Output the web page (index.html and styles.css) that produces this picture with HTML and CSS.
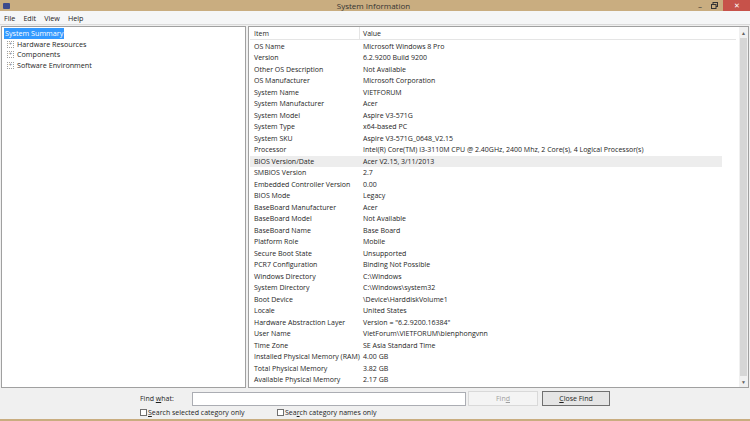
FILE: index.html
```html
<!DOCTYPE html>
<html lang="en">
<head>
    <meta charset="UTF-8">
    <title>System Information</title>
    <link rel="stylesheet" href="styles.css">
</head>
<body>
    <div class="window">
        <div class="titlebar">
            <span class="app-icon"></span>
            <span class="title">System Information</span>
            <div class="controls">
                <span class="ctl min">&#8211;</span>
                <span class="ctl restore">
                    <svg width="7" height="7" viewBox="0 0 7 7"><rect x="2" y="0.5" width="4.5" height="4" fill="none" stroke="#333" stroke-width="1"/><rect x="0.5" y="2.5" width="4.5" height="4" fill="#c9ad80" stroke="#333" stroke-width="1"/></svg>
                </span>
                <span class="ctl close">&#10005;</span>
            </div>
        </div>

        <div class="menubar">
            <span>File</span>
            <span>Edit</span>
            <span>View</span>
            <span>Help</span>
        </div>

        <div class="main">
            <div class="tree">
                <div class="node selected">System Summary</div>
                <div class="node child"><span class="plus">+</span>Hardware Resources</div>
                <div class="node child"><span class="plus">+</span>Components</div>
                <div class="node child"><span class="plus">+</span>Software Environment</div>
            </div>

            <div class="details">
                <div class="list">
                    <div class="row head"><span class="item">Item</span><span class="value">Value</span></div>
                    <div class="row"><span class="item">OS Name</span><span class="value">Microsoft Windows 8 Pro</span></div>
                    <div class="row"><span class="item">Version</span><span class="value">6.2.9200 Build 9200</span></div>
                    <div class="row"><span class="item">Other OS Description</span><span class="value">Not Available</span></div>
                    <div class="row"><span class="item">OS Manufacturer</span><span class="value">Microsoft Corporation</span></div>
                    <div class="row"><span class="item">System Name</span><span class="value">VIETFORUM</span></div>
                    <div class="row"><span class="item">System Manufacturer</span><span class="value">Acer</span></div>
                    <div class="row"><span class="item">System Model</span><span class="value">Aspire V3-571G</span></div>
                    <div class="row"><span class="item">System Type</span><span class="value">x64-based PC</span></div>
                    <div class="row"><span class="item">System SKU</span><span class="value">Aspire V3-571G_0648_V2.15</span></div>
                    <div class="row"><span class="item">Processor</span><span class="value">Intel(R) Core(TM) i3-3110M CPU @ 2.40GHz, 2400 Mhz, 2 Core(s), 4 Logical Processor(s)</span></div>
                    <div class="row hover"><span class="item">BIOS Version/Date</span><span class="value">Acer V2.15, 3/11/2013</span></div>
                    <div class="row"><span class="item">SMBIOS Version</span><span class="value">2.7</span></div>
                    <div class="row"><span class="item">Embedded Controller Version</span><span class="value">0.00</span></div>
                    <div class="row"><span class="item">BIOS Mode</span><span class="value">Legacy</span></div>
                    <div class="row"><span class="item">BaseBoard Manufacturer</span><span class="value">Acer</span></div>
                    <div class="row"><span class="item">BaseBoard Model</span><span class="value">Not Available</span></div>
                    <div class="row"><span class="item">BaseBoard Name</span><span class="value">Base Board</span></div>
                    <div class="row"><span class="item">Platform Role</span><span class="value">Mobile</span></div>
                    <div class="row"><span class="item">Secure Boot State</span><span class="value">Unsupported</span></div>
                    <div class="row"><span class="item">PCR7 Configuration</span><span class="value">Binding Not Possible</span></div>
                    <div class="row"><span class="item">Windows Directory</span><span class="value">C:\Windows</span></div>
                    <div class="row"><span class="item">System Directory</span><span class="value">C:\Windows\system32</span></div>
                    <div class="row"><span class="item">Boot Device</span><span class="value">\Device\HarddiskVolume1</span></div>
                    <div class="row"><span class="item">Locale</span><span class="value">United States</span></div>
                    <div class="row"><span class="item">Hardware Abstraction Layer</span><span class="value">Version = "6.2.9200.16384"</span></div>
                    <div class="row"><span class="item">User Name</span><span class="value">VietForum\VIETFORUM\bienphongvnn</span></div>
                    <div class="row"><span class="item">Time Zone</span><span class="value">SE Asia Standard Time</span></div>
                    <div class="row"><span class="item">Installed Physical Memory (RAM)</span><span class="value">4.00 GB</span></div>
                    <div class="row"><span class="item">Total Physical Memory</span><span class="value">3.82 GB</span></div>
                    <div class="row"><span class="item">Available Physical Memory</span><span class="value">2.17 GB</span></div>
                </div>
                <div class="scrollbar">
                    <span class="arrow">&#9650;</span>
                    <span class="thumb"></span>
                    <span class="arrow">&#9660;</span>
                </div>
            </div>
        </div>

        <div class="findbar">
            <div class="find-row">
                <label class="find-label">Find <u>w</u>hat:</label>
                <input type="text" class="find-input">
                <button class="btn" disabled>Fin<u>d</u></button>
                <button class="btn primary"><u>C</u>lose Find</button>
            </div>
            <div class="check-row">
                <label class="check"><span class="box"></span><u>S</u>earch selected category only</label>
                <label class="check"><span class="box"></span>Sea<u>r</u>ch category names only</label>
            </div>
        </div>
    </div>
</body>
</html>
```

FILE: styles.css
```css
* {
    margin: 0;
    padding: 0;
    box-sizing: border-box;
}
body {
    font-family: "Open Sans", "Noto Sans", sans-serif;
    font-size: 7px;
    color: #1e1e1e;
    background: #c9ad80;
    width: 750px;
    height: 421px;
    overflow: hidden;
}
.window {
    height: 421px;
    display: flex;
    flex-direction: column;
    padding-bottom: 2px;
}
.titlebar {
    height: 11px;
    display: flex;
    align-items: center;
    background: #c9ad80;
}
.app-icon {
    width: 7px;
    height: 6px;
    margin-left: 3px;
    background: #3d4a8c;
    border-radius: 1px;
}
.title {
    flex: 1;
    text-align: center;
    font-size: 8px;
    color: #333;
    margin-left: 44px;
}
.controls {
    display: flex;
    height: 11px;
}
.ctl {
    width: 14px;
    display: flex;
    align-items: center;
    justify-content: center;
    color: #333;
    font-size: 8px;
}
.ctl.close {
    width: 27px;
    background: #c7524a;
    color: #fff;
    font-size: 7px;
    margin-left: 2px;
}
.menubar {
    height: 14px;
    background: #f5f6f7;
    display: flex;
    align-items: center;
    gap: 8px;
    padding-left: 4px;
    font-size: 7.2px;
    border-bottom: 1px solid #dadada;
}
.main {
    flex: 1;
    display: grid;
    grid-template-columns: 245px 1fr;
    gap: 2px;
    padding: 1px 1px 0 1px;
    background: #f0f0f0;
    min-height: 0;
}
.tree {
    background: #fff;
    border: 1px solid #a0a0a0;
    padding: 1px 0 0 2px;
}
.node {
    height: 11px;
    line-height: 11px;
    font-size: 7.2px;
    white-space: nowrap;
}
.node.selected {
    display: inline-block;
    background: #3399ff;
    color: #fff;
    padding: 0 1px;
}
.node.child {
    display: flex;
    align-items: center;
    padding-left: 3px;
    margin-top: -0.5px;
}
.plus {
    width: 7px;
    height: 7px;
    border: 1px dotted #a0a0a0;
    font-size: 6px;
    line-height: 5px;
    text-align: center;
    color: #777;
    margin-right: 3px;
}
.details {
    background: #fff;
    border: 1px solid #a0a0a0;
    display: flex;
    overflow: hidden;
}
.list {
    flex: 1;
    padding-left: 1px;
}
.row {
    display: flex;
    height: 11.52px;
    line-height: 11.52px;
    white-space: nowrap;
    font-size: 7px;
}
.row.head {
    height: 13px;
    line-height: 13px;
    border-bottom: 1px solid #e5e5e5;
    margin-bottom: 0.5px;
}
.row.head .item {
    border-right: 1px solid #e5e5e5;
}
.row.hover {
    background: #ededed;
    margin-right: 14px;
}
.item {
    width: 110px;
    padding-left: 4px;
    flex-shrink: 0;
}
.value {
    padding-left: 3px;
}
.scrollbar {
    width: 12px;
    display: flex;
    flex-direction: column;
    background: #f0f0f0;
    border-left: 3px solid #fff;
}
.arrow {
    height: 11px;
    font-size: 5px;
    color: #606060;
    display: flex;
    align-items: center;
    justify-content: center;
    background: #f0f0f0;
}
.thumb {
    flex: 1;
    background: #d6d6d6;
    margin: 0 1px;
}
.findbar {
    height: 31px;
    background: #f0f0f0;
    padding: 3px 0 0 140px;
    display: flex;
    flex-direction: column;
    gap: 2px;
}
.find-row {
    display: flex;
    align-items: center;
    height: 15px;
}
.find-label {
    width: 52px;
    font-size: 7px;
}
.find-input {
    width: 274px;
    height: 14px;
    border: 1px solid #abadb3;
    background: #fff;
    margin-right: 2px;
}
.btn {
    width: 70px;
    height: 15px;
    font-family: inherit;
    font-size: 7px;
    background: #e5e5e5;
    border: 1px solid #acacac;
    color: #1e1e1e;
    margin-right: 4px;
}
.btn:disabled {
    background: #f4f4f4;
    border-color: #d9d9d9;
    color: #a0a0a0;
}
.btn.primary {
    width: 68px;
    border-color: #707070;
}
.check-row {
    display: flex;
}
.check {
    display: flex;
    align-items: center;
    font-size: 7px;
    width: 137px;
}
.box {
    width: 7px;
    height: 7px;
    border: 1px solid #707070;
    background: #fff;
    margin-right: 1px;
}
```
